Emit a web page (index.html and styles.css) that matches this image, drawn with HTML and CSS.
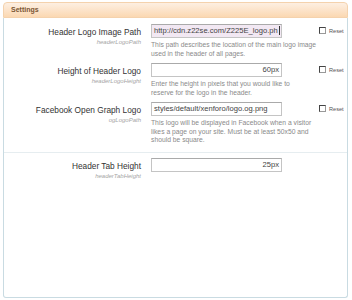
FILE: index.html
```html
<!DOCTYPE html>
<html lang="en">
<head>
    <meta charset="UTF-8">
    <title>Settings</title>
    <link rel="stylesheet" href="styles.css">
</head>
<body>
    <div class="section">
        <div class="section-head">Settings</div>

        <div class="section-body">
            <div class="unit">
                <div class="label-col">
                    <div class="label">Header Logo Image Path</div>
                    <div class="sub">headerLogoPath</div>
                </div>
                <div class="ctrl-col">
                    <div class="field focused"><span class="caret">http://cdn.z22se.com/Z225E_logo.ph</span></div>
                    <div class="explain">This path describes the location of the main logo image<br>used in the header of all pages.</div>
                </div>
                <div class="reset"><span class="box"></span>Reset</div>
            </div>

            <div class="unit">
                <div class="label-col">
                    <div class="label">Height of Header Logo</div>
                    <div class="sub">headerLogoHeight</div>
                </div>
                <div class="ctrl-col">
                    <div class="field num">60px</div>
                    <div class="explain">Enter the height in pixels that you would like to<br>reserve for the logo in the header.</div>
                </div>
                <div class="reset"><span class="box"></span>Reset</div>
            </div>

            <div class="unit">
                <div class="label-col">
                    <div class="label">Facebook Open Graph Logo</div>
                    <div class="sub">ogLogoPath</div>
                </div>
                <div class="ctrl-col">
                    <div class="field">styles/default/xenforo/logo.og.png</div>
                    <div class="explain">This logo will be displayed in Facebook when a visitor<br>likes a page on your site. Must be at least 50x50 and<br>should be square.</div>
                </div>
                <div class="reset"><span class="box"></span>Reset</div>
            </div>

            <hr class="divider">

            <div class="unit">
                <div class="label-col">
                    <div class="label">Header Tab Height</div>
                    <div class="sub">headerTabHeight</div>
                </div>
                <div class="ctrl-col">
                    <div class="field num">25px</div>
                </div>
            </div>
        </div>
    </div>
</body>
</html>
```

FILE: styles.css
```css
body {
    margin: 0;
    background-color: #fff;
    font-family: "Liberation Sans", Arial, sans-serif;
    color: #333;
}
.section {
    margin: 2px 4px 0 3px;
    height: 296px;
    display: flex;
    flex-direction: column;
}
.section-head {
    height: 14px;
    line-height: 14px;
    padding-left: 7px;
    font-size: 7px;
    font-weight: bold;
    color: #7a5634;
    background: linear-gradient(#fdefe2, #fbd8b2);
    border: 1px solid #f4d2ad;
    border-radius: 4px 4px 0 0;
}
.section-body {
    flex: 1;
    padding-top: 1px;
    border: 1px solid #c9dbe2;
    border-top: none;
    border-radius: 0 0 3px 3px;
}
.unit {
    display: flex;
    padding-top: 5px;
}
.label-col {
    width: 137px;
    text-align: right;
    padding-top: 2px;
}
.label {
    font-size: 8.3px;
    line-height: 13px;
    color: #333;
}
.sub {
    font-size: 6px;
    line-height: 7px;
    font-style: italic;
    color: #a5a5a5;
}
.ctrl-col {
    width: 168px;
    margin-left: 10px;
}
.field {
    width: 131px;
    height: 14px;
    box-sizing: border-box;
    padding: 0 2px;
    font-size: 7.6px;
    line-height: 12px;
    white-space: nowrap;
    overflow: hidden;
    color: #444;
    background-color: #fff;
    border: 1px solid #c4c4c4;
    border-top-color: #aaa;
}
.field.focused {
    padding-right: 1px;
    background-color: #f2e8f3;
}
.field.num {
    text-align: right;
}
.caret {
    padding-right: 1px;
    border-right: 1px solid #333;
}
.explain {
    margin-top: 3px;
    font-size: 6.75px;
    line-height: 8.5px;
    white-space: nowrap;
    color: #8a8a8a;
}
.reset {
    display: flex;
    align-items: center;
    margin-top: 3px;
    height: 7px;
    font-size: 5.6px;
    color: #555;
}
.box {
    width: 5px;
    height: 5px;
    margin-right: 3px;
    background-color: #fff;
    border: 1px solid #999;
    border-top-color: #444;
    border-left-color: #444;
}
.divider {
    margin: 7px 0 0;
    border: none;
    border-top: 1px solid #e6edf0;
}
```
